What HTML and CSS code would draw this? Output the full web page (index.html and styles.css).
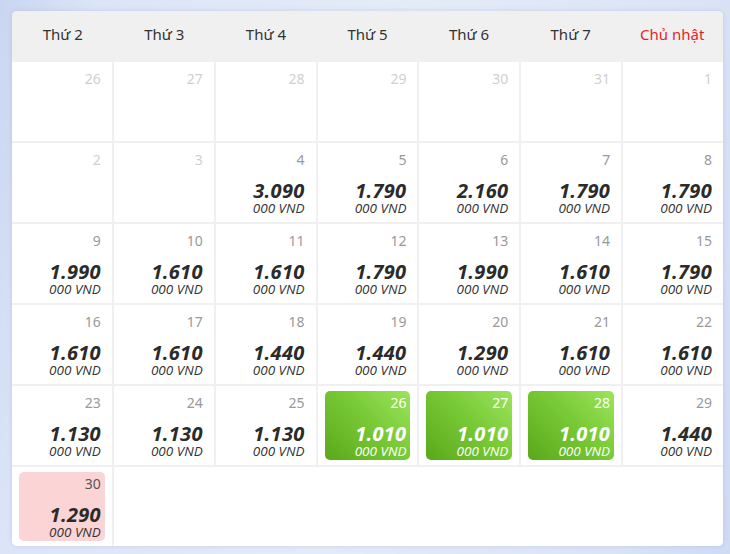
FILE: index.html
```html
<!DOCTYPE html>
<html lang="vi">
<head>
<meta charset="utf-8">
<title>Lịch giá vé</title>
<link rel="stylesheet" href="styles.css">
</head>
<body>
<div class="panel">
  <div class="head">
    <div class="hd">Thứ 2</div>
    <div class="hd">Thứ 3</div>
    <div class="hd">Thứ 4</div>
    <div class="hd">Thứ 5</div>
    <div class="hd">Thứ 6</div>
    <div class="hd">Thứ 7</div>
    <div class="hd sun">Chủ nhật</div>
  </div>
  <div class="grid">
    <div class="cell off"><div class="in"><span class="d">26</span></div></div>
    <div class="cell off"><div class="in"><span class="d">27</span></div></div>
    <div class="cell off"><div class="in"><span class="d">28</span></div></div>
    <div class="cell off"><div class="in"><span class="d">29</span></div></div>
    <div class="cell off"><div class="in"><span class="d">30</span></div></div>
    <div class="cell off"><div class="in"><span class="d">31</span></div></div>
    <div class="cell off"><div class="in"><span class="d">1</span></div></div>

    <div class="cell off"><div class="in"><span class="d">2</span></div></div>
    <div class="cell off"><div class="in"><span class="d">3</span></div></div>
    <div class="cell"><div class="in"><span class="d">4</span><div class="p">3.090</div><div class="u">000 VND</div></div></div>
    <div class="cell"><div class="in"><span class="d">5</span><div class="p">1.790</div><div class="u">000 VND</div></div></div>
    <div class="cell"><div class="in"><span class="d">6</span><div class="p">2.160</div><div class="u">000 VND</div></div></div>
    <div class="cell"><div class="in"><span class="d">7</span><div class="p">1.790</div><div class="u">000 VND</div></div></div>
    <div class="cell"><div class="in"><span class="d">8</span><div class="p">1.790</div><div class="u">000 VND</div></div></div>

    <div class="cell"><div class="in"><span class="d">9</span><div class="p">1.990</div><div class="u">000 VND</div></div></div>
    <div class="cell"><div class="in"><span class="d">10</span><div class="p">1.610</div><div class="u">000 VND</div></div></div>
    <div class="cell"><div class="in"><span class="d">11</span><div class="p">1.610</div><div class="u">000 VND</div></div></div>
    <div class="cell"><div class="in"><span class="d">12</span><div class="p">1.790</div><div class="u">000 VND</div></div></div>
    <div class="cell"><div class="in"><span class="d">13</span><div class="p">1.990</div><div class="u">000 VND</div></div></div>
    <div class="cell"><div class="in"><span class="d">14</span><div class="p">1.610</div><div class="u">000 VND</div></div></div>
    <div class="cell"><div class="in"><span class="d">15</span><div class="p">1.790</div><div class="u">000 VND</div></div></div>

    <div class="cell"><div class="in"><span class="d">16</span><div class="p">1.610</div><div class="u">000 VND</div></div></div>
    <div class="cell"><div class="in"><span class="d">17</span><div class="p">1.610</div><div class="u">000 VND</div></div></div>
    <div class="cell"><div class="in"><span class="d">18</span><div class="p">1.440</div><div class="u">000 VND</div></div></div>
    <div class="cell"><div class="in"><span class="d">19</span><div class="p">1.440</div><div class="u">000 VND</div></div></div>
    <div class="cell"><div class="in"><span class="d">20</span><div class="p">1.290</div><div class="u">000 VND</div></div></div>
    <div class="cell"><div class="in"><span class="d">21</span><div class="p">1.610</div><div class="u">000 VND</div></div></div>
    <div class="cell"><div class="in"><span class="d">22</span><div class="p">1.610</div><div class="u">000 VND</div></div></div>

    <div class="cell"><div class="in"><span class="d">23</span><div class="p">1.130</div><div class="u">000 VND</div></div></div>
    <div class="cell"><div class="in"><span class="d">24</span><div class="p">1.130</div><div class="u">000 VND</div></div></div>
    <div class="cell"><div class="in"><span class="d">25</span><div class="p">1.130</div><div class="u">000 VND</div></div></div>
    <div class="cell cheap"><div class="in"><span class="d">26</span><div class="p">1.010</div><div class="u">000 VND</div></div></div>
    <div class="cell cheap"><div class="in"><span class="d">27</span><div class="p">1.010</div><div class="u">000 VND</div></div></div>
    <div class="cell cheap"><div class="in"><span class="d">28</span><div class="p">1.010</div><div class="u">000 VND</div></div></div>
    <div class="cell"><div class="in"><span class="d">29</span><div class="p">1.440</div><div class="u">000 VND</div></div></div>

    <div class="cell sel"><div class="in"><span class="d">30</span><div class="p">1.290</div><div class="u">000 VND</div></div></div>
    <div class="rest"></div>
  </div>
</div>
</body>
</html>
```
FILE: styles.css
```css
html, body {
  margin: 0;
  padding: 0;
}
body {
  width: 730px;
  height: 554px;
  overflow: hidden;
  background: linear-gradient(100deg, #c9d6f1 0%, #dce5f7 12%, #e4ebf8 50%, #dbe4f6 85%, #cfdbf3 100%);
  font-family: "Open Sans", "Noto Sans", sans-serif;
  color: #333;
}
.panel {
  margin: 11px 0 0 12px;
  width: 711px;
  background: #fff;
  border-radius: 5px;
  overflow: hidden;
  box-shadow: 0 0 4px rgba(120, 140, 180, 0.25);
}
.head {
  display: grid;
  grid-template-columns: repeat(7, 1fr);
  height: 50px;
  background: #f0f0f0;
  align-items: center;
}
.hd {
  text-align: center;
  font-family: "Noto Sans", sans-serif;
  font-size: 15px;
  color: #333;
  padding-bottom: 5px;
}
.hd.sun {
  color: #ec1c2c;
}
.grid {
  display: grid;
  grid-template-columns: repeat(7, 1fr);
  grid-auto-rows: 79px;
  gap: 2px;
  padding-top: 1px;
  background: #f0f0f0;
}
.cell {
  background: #fff;
  padding: 5px 7px;
  box-sizing: border-box;
}
.rest {
  grid-column: span 6;
  background: #fff;
}
.in {
  height: 100%;
  box-sizing: border-box;
  border-radius: 5px;
  padding: 3px 4px 1px;
  display: flex;
  flex-direction: column;
  align-items: flex-end;
}
.d {
  font-family: "Noto Sans", sans-serif;
  font-size: 14px;
  line-height: 18px;
  color: #999;
}
.off .d {
  color: #cfcfcf;
}
.p {
  margin-top: auto;
  font-size: 20px;
  line-height: 21px;
  font-weight: 700;
  font-style: italic;
  color: #2b2b2b;
  letter-spacing: 0.3px;
}
.u {
  font-size: 13.5px;
  line-height: 15px;
  font-style: italic;
  font-weight: 400;
  color: #333;
}
.cheap .in {
  background: linear-gradient(225deg, #9ce45c 0%, #79ca37 45%, #5aa81a 100%);
}
.cheap .d,
.cheap .p,
.cheap .u {
  color: #fff;
}
.sel .in {
  background: #fbd4d5;
}
.sel .d {
  color: #555;
}
```
